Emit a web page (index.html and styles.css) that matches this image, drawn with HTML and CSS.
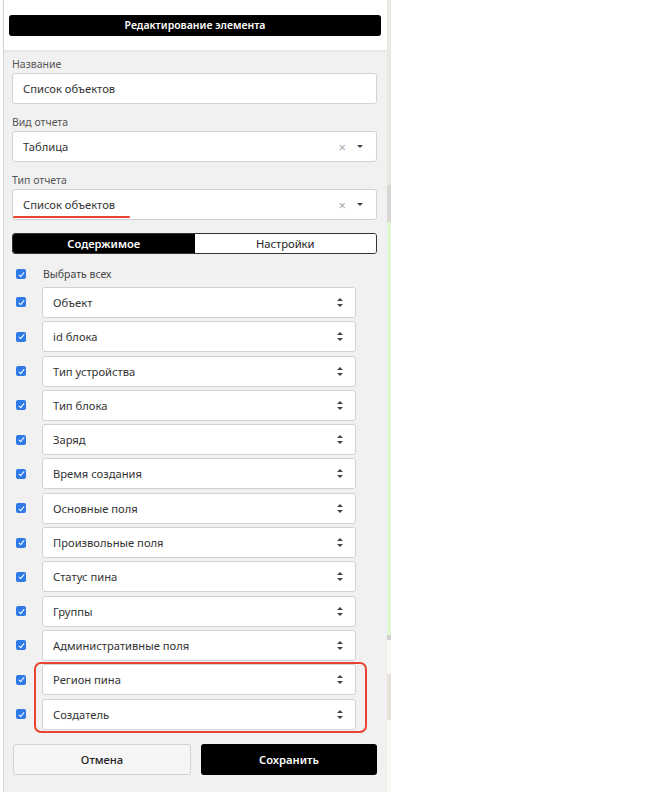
FILE: index.html
```html
<!DOCTYPE html>
<html lang="ru">
<head>
  <meta charset="UTF-8">
  <title>Редактирование элемента</title>
  <link rel="stylesheet" href="styles.css">
</head>
<body>
  <div class="page">
    <div class="panel">
      <div class="panel-head">
        <div class="title">Редактирование элемента</div>
      </div>

      <div class="panel-body">
        <label class="label">Название</label>
        <div class="field">Список объектов</div>

        <label class="label">Вид отчета</label>
        <div class="field select">
          <span>Таблица</span>
          <span class="clear">×</span>
          <span class="caret"></span>
        </div>

        <label class="label">Тип отчета</label>
        <div class="field select">
          <span>Список объектов</span>
          <span class="clear">×</span>
          <span class="caret"></span>
          <!-- пометка красным -->
          <span class="underline"></span>
        </div>

        <div class="tabs">
          <div class="tab active">Содержимое</div>
          <div class="tab">Настройки</div>
        </div>

        <div class="columns">
          <div class="all-row">
            <span class="check"></span>
            <span>Выбрать всех</span>
          </div>
          <div class="row"><span class="check"></span><div class="col-select">Объект<span class="sort"></span></div></div>
          <div class="row"><span class="check"></span><div class="col-select">id блока<span class="sort"></span></div></div>
          <div class="row"><span class="check"></span><div class="col-select">Тип устройства<span class="sort"></span></div></div>
          <div class="row"><span class="check"></span><div class="col-select">Тип блока<span class="sort"></span></div></div>
          <div class="row"><span class="check"></span><div class="col-select">Заряд<span class="sort"></span></div></div>
          <div class="row"><span class="check"></span><div class="col-select">Время создания<span class="sort"></span></div></div>
          <div class="row"><span class="check"></span><div class="col-select">Основные поля<span class="sort"></span></div></div>
          <div class="row"><span class="check"></span><div class="col-select">Произвольные поля<span class="sort"></span></div></div>
          <div class="row"><span class="check"></span><div class="col-select">Статус пина<span class="sort"></span></div></div>
          <div class="row"><span class="check"></span><div class="col-select">Группы<span class="sort"></span></div></div>
          <div class="row"><span class="check"></span><div class="col-select">Административные поля<span class="sort"></span></div></div>
          <div class="row"><span class="check"></span><div class="col-select">Регион пина<span class="sort"></span></div></div>
          <div class="row"><span class="check"></span><div class="col-select">Создатель<span class="sort"></span></div></div>
          <!-- рамка вокруг новых полей -->
          <div class="highlight"></div>
        </div>

        <div class="actions">
          <button class="btn cancel">Отмена</button>
          <button class="btn save">Сохранить</button>
        </div>
      </div>
    </div>
    <div class="side"></div>
  </div>
</body>
</html>
```

FILE: styles.css
```css
body {
  margin: 0;
  background: #ffffff;
  font-family: "Noto Sans", Roboto, sans-serif;
  color: #333;
}
.page {
  display: flex;
  height: 792px;
}
.panel {
  margin-left: 3px;
  width: 383px;
  border-left: 1px solid #d6d6d6;
  background: #f1f1f1;
}
.panel-head {
  height: 50px;
  padding: 15px 6px 0 5px;
  box-sizing: border-box;
  background: #ffffff;
  box-shadow: 0 1px 4px rgba(0, 0, 0, 0.08);
}
.title {
  height: 21px;
  line-height: 21px;
  background: #000;
  color: #fff;
  border-radius: 3px;
  text-align: center;
  font-size: 10.5px;
  font-weight: 600;
}
.panel-body {
  padding: 7px 10px 0 8px;
  display: flex;
  flex-direction: column;
}
.label {
  font-size: 10.5px;
  line-height: 14px;
  color: #555;
  margin-bottom: 2px;
}
.field {
  position: relative;
  height: 31px;
  box-sizing: border-box;
  border: 1px solid #d2d2d2;
  border-radius: 3px;
  background: #fff;
  padding: 0 10px;
  display: flex;
  align-items: center;
  font-size: 11.2px;
  margin-bottom: 11px;
}
.select span:first-child {
  flex: 1;
}
.clear {
  color: #aaa;
  font-size: 13px;
  margin-right: 11px;
}
.caret {
  width: 0;
  height: 0;
  border-left: 3px solid transparent;
  border-right: 3px solid transparent;
  border-top: 3px solid #444;
  margin-right: 3px;
}
.underline {
  position: absolute;
  left: 0;
  bottom: 1px;
  width: 117px;
  height: 2px;
  border-radius: 1px;
  background: #e8432e;
}
.tabs {
  display: flex;
  margin-top: 2px;
  height: 21px;
  border: 1px solid #333;
  border-radius: 3px;
  overflow: hidden;
  box-sizing: border-box;
}
.tab {
  flex: 1;
  text-align: center;
  font-size: 11.2px;
  line-height: 19px;
  background: #fff;
  color: #222;
}
.tab.active {
  background: #000;
  color: #fff;
  font-weight: 600;
}
.columns {
  position: relative;
  display: flex;
  flex-direction: column;
  gap: 3.3px;
  margin-top: 12px;
}
.all-row {
  display: flex;
  align-items: center;
  height: 16px;
  font-size: 10.5px;
  color: #444;
  margin-bottom: 1.7px;
}
.check {
  width: 10px;
  height: 10px;
  margin: 0 17px 0 4px;
  border-radius: 2px;
  background: #2e7ae6;
  position: relative;
  flex: none;
}
.check::after {
  content: "";
  position: absolute;
  left: 3.5px;
  top: 1.5px;
  width: 2px;
  height: 5px;
  border: solid #fff;
  border-width: 0 1.5px 1.5px 0;
  transform: rotate(40deg);
}
.row {
  display: flex;
  align-items: center;
}
.row .check {
  margin-right: 16px;
}
.col-select {
  width: 314px;
  height: 31px;
  box-sizing: border-box;
  border: 1px solid #d2d2d2;
  border-radius: 3px;
  background: #fff;
  padding: 0 10px;
  display: flex;
  align-items: center;
  justify-content: space-between;
  font-size: 11.2px;
}
.sort {
  width: 7px;
  height: 9px;
  margin-right: 1px;
  position: relative;
}
.sort::before, .sort::after {
  content: "";
  position: absolute;
  left: 0;
  border-left: 3.5px solid transparent;
  border-right: 3.5px solid transparent;
}
.sort::before {
  top: 0;
  border-bottom: 3.5px solid #444;
}
.sort::after {
  bottom: 0;
  border-top: 3.5px solid #444;
}
.highlight {
  position: absolute;
  left: 22px;
  right: 10px;
  bottom: -3px;
  height: 71px;
  box-sizing: border-box;
  border: 2.5px solid #e8432e;
  border-radius: 7px;
}
.actions {
  display: flex;
  gap: 10px;
  margin-top: 14px;
  padding-left: 1px;
}
.btn {
  flex: 1;
  height: 31px;
  border-radius: 3px;
  font-family: inherit;
  font-size: 11.2px;
  cursor: pointer;
}
.cancel {
  background: #f6f6f6;
  border: 1px solid #d2d2d2;
  color: #222;
  font-weight: 500;
}
.save {
  background: #000;
  border: none;
  color: #fff;
  font-weight: 600;
}
.side {
  width: 4px;
  background: linear-gradient(#ebe8e3 0 185px, #d9d7d3 185px 222px, #e2f6d4 222px 635px, #cfcfcf 635px 640px, #f8f8f2 640px 674px, #e6e1d9 674px 720px, #f8f8f2 720px 792px);
}
```
